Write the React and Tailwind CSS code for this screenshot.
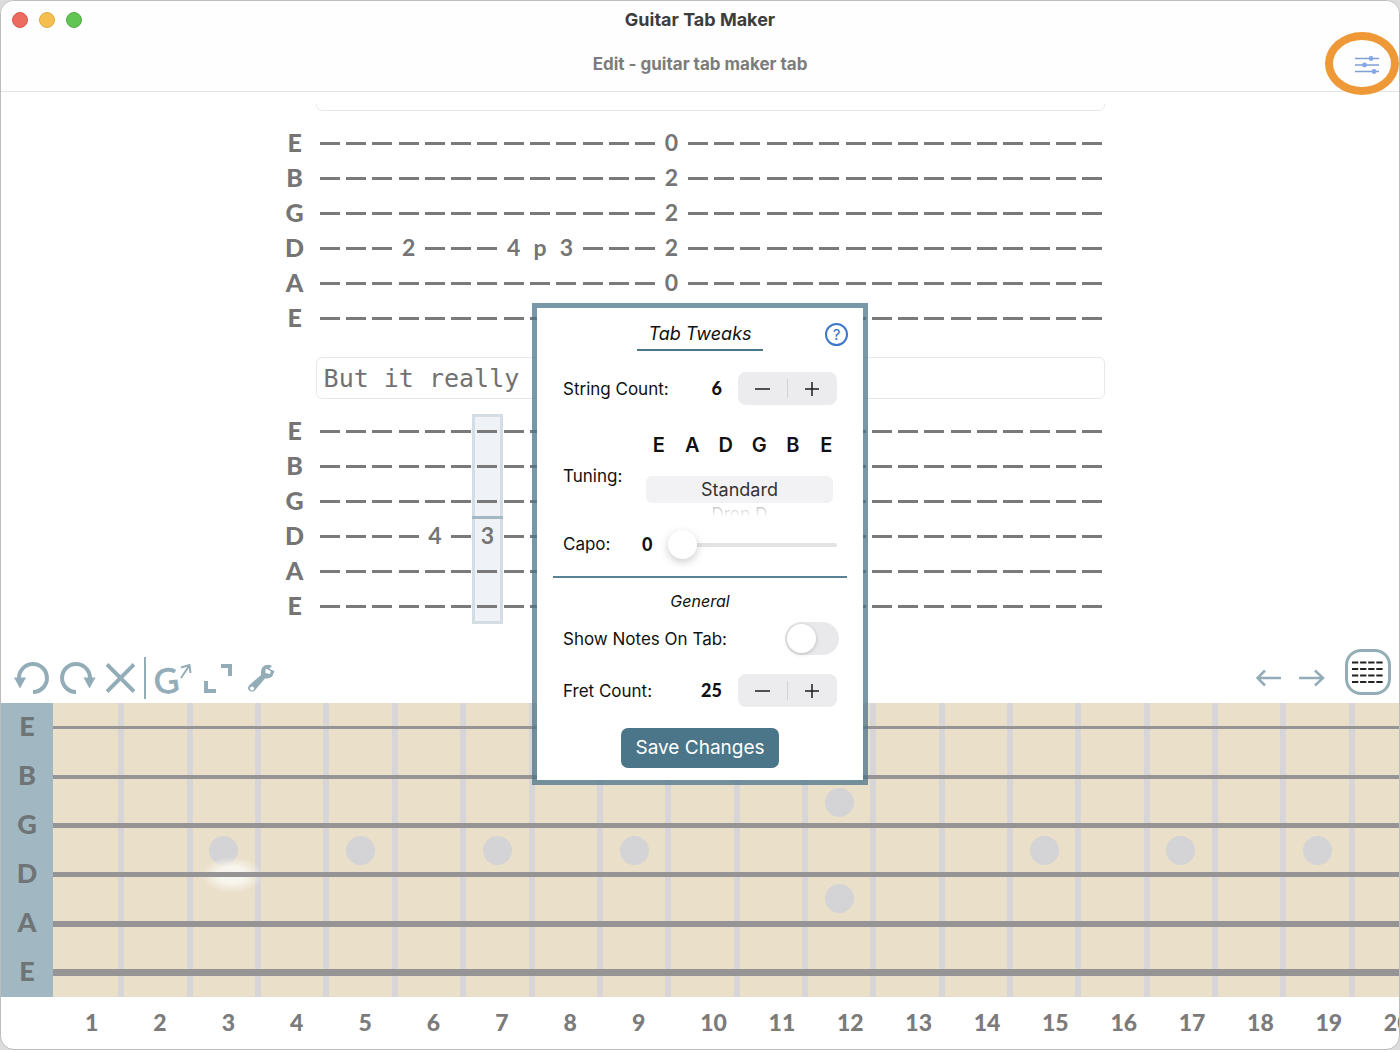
import { useState } from 'react';

const STRINGS = ['E', 'B', 'G', 'D', 'A', 'E'];
const COLUMNS = 30;
const STRING_HEIGHTS = ['h-[3px]', 'h-1', 'h-[5px]', 'h-[5px]', 'h-1.5', 'h-[7px]'];
const SINGLE_DOTS = [3, 5, 7, 9, 15, 17, 19, 21];
const DOUBLE_DOTS = [12, 24];

// notes are keyed by "string-column"
const FIRST_TAB = {
    '0-13': '0', '1-13': '2', '2-13': '2', '3-13': '2', '4-13': '0',
    '3-3': '2', '3-7': '4', '3-8': 'p', '3-9': '3',
};
const SECOND_TAB = { '3-4': '4', '3-6': '3' };

const TabBlock = ({ notes, selected }) => (
    <div className="flex">
        <div className="w-9 pr-2 font-['Lato',sans-serif] text-[25px] font-black text-[#757575]">
            {STRINGS.map((name, i) => (
                <div key={i} className="h-[35px] text-center leading-[33px]">{name}</div>
            ))}
        </div>
        <div className="flex-1 grid grid-cols-[repeat(30,minmax(0,1fr))]">
            {Array.from({ length: COLUMNS }, (_, col) => (
                <div key={col} className="relative">
                    {col === selected && (
                        <div className="absolute inset-y-0 -inset-x-0.5 border-[3px] border-[#d3dde3] bg-[#eff3f7]">
                            <div className="absolute -inset-x-[3px] top-[99px] h-[3px] bg-[#a4b8c4]" />
                        </div>
                    )}
                    {STRINGS.map((_, row) => {
                        const note = notes[`${row}-${col}`];
                        return (
                            <div key={row} className="relative h-[35px] flex items-center justify-center">
                                {note ? (
                                    <span className="pb-0.5 font-['Lato',sans-serif] text-[23px] leading-none font-bold text-[#757575]">{note}</span>
                                ) : (
                                    <span className="w-5 h-[3px] bg-[#7a7a7a]" />
                                )}
                            </div>
                        );
                    })}
                </div>
            ))}
        </div>
    </div>
);

const Lyric = ({ value, label, className }) => (
    <div className={`ml-[35px] flex ${className}`}>
        <input
            type="text"
            aria-label={label}
            defaultValue={value}
            className="w-full h-[42px] rounded-md border border-[#e8e8e8] bg-white px-[7px] font-['DejaVu_Sans_Mono',monospace] text-[25px] text-[#717171]"
        />
    </div>
);

const Toolbar = () => (
    <div className="h-[54px] flex items-start justify-between pl-[13px] pr-2 text-[#93adb8]">
        <div className="flex items-center pt-2">
            <button aria-label="Undo">
                <svg width="36" height="42" viewBox="0 0 36 42" fill="none">
                    <path d="M5 22A14 14 0 1 1 19 35" stroke="currentColor" strokeWidth="4" />
                    <path d="M0 20.500H12L6 31.500Z" fill="currentColor" />
                </svg>
            </button>
            <button aria-label="Redo" className="ml-2.5">
                <svg width="36" height="42" viewBox="0 0 36 42" fill="none">
                    <path d="M30 22A14 14 0 1 0 16 35" stroke="currentColor" strokeWidth="4" />
                    <path d="M23.500 20.500H35.500L29.500 31.500Z" fill="currentColor" />
                </svg>
            </button>
            <button aria-label="Clear" className="ml-2.5">
                <svg width="29" height="42" viewBox="0 0 29 42" fill="none">
                    <path d="M1 7.500L28 34.500M28 7.500L1 34.500" stroke="currentColor" strokeWidth="4" />
                </svg>
            </button>
            <div className="ml-[9px] h-[42px] w-0.5 bg-[#93adb8]" />
            <button aria-label="Chord" className="ml-1">
                <svg width="44" height="42" viewBox="0 0 44 42" fill="none">
                    <text x="4" y="36" transform="rotate(-8 18 24)" fill="currentColor" stroke="currentColor" strokeWidth="1" className="font-['Lato',sans-serif] text-[34px] leading-none">G</text>
                    <path d="M31 21L39 9M31 10.500L39.500 8L40.500 16" stroke="currentColor" strokeWidth="2" />
                </svg>
            </button>
            <button aria-label="Expand" className="ml-[9px]">
                <svg width="30" height="42" viewBox="0 0 30 42" fill="none">
                    <path d="M3 24V34H13M18 9H27V19" stroke="currentColor" strokeWidth="4" />
                </svg>
            </button>
            <button aria-label="Settings" className="ml-3.5">
                <svg width="30" height="42" viewBox="0 0 30 42">
                    <path
                        fill="currentColor"
                        fillRule="evenodd"
                        d="M25 9C20 6 14 9 14 15L14 18L2.500 28C0 31 1 34 4 34.500C6 35 8 34 9 32L18 21.500C22 22 26 20 26 17L27 14.500L24 13.500L23 17L18.500 16L18.500 12L22 12ZM5 29.500a2 2 0 1 0 .1 0Z"
                    />
                    <path d="M21 12L26.500 14.500L24 19" fill="none" stroke="currentColor" strokeWidth="1.500" />
                </svg>
            </button>
        </div>
        <div className="flex items-start">
            <button aria-label="Previous" className="pt-4">
                <svg width="26" height="26" viewBox="0 0 26 26" fill="none">
                    <path d="M25 13H1.500M9 5.500L1.500 13L9 20.500" stroke="currentColor" strokeWidth="2.500" />
                </svg>
            </button>
            <button aria-label="Next" className="pt-4 ml-[17px]">
                <svg width="26" height="26" viewBox="0 0 26 26" fill="none">
                    <path d="M0 13H24M16 5.500L24 13L16 20.500" stroke="currentColor" strokeWidth="2.500" />
                </svg>
            </button>
            <button aria-label="Show tab" className="ml-5 size-[46px] rounded-2xl border-[3px] border-[#93adb8] flex items-center justify-center">
                <svg width="32" height="24" viewBox="0 0 32 24" fill="none">
                    <path d="M0 2.500H32M0 9H32M0 15.500H32M0 22H32" stroke="#222" strokeWidth="1.800" strokeDasharray="6.300 1.800" />
                </svg>
            </button>
        </div>
    </div>
);

const Fretboard = ({ frets }) => (
    <div>
        <div className="flex">
            <div className="w-[52px] shrink-0 bg-[#a1b8c2] font-['Lato',sans-serif] text-[27px] font-black text-[#6f7477]">
                {STRINGS.map((name, i) => (
                    <div key={i} className="h-[49px] text-center leading-[46px]">{name}</div>
                ))}
            </div>
            <div className="relative flex-1 min-w-0 overflow-hidden bg-[#eadfc9] pl-[3px]">
                <div className="h-full w-[1709px] grid grid-cols-[repeat(25,minmax(0,1fr))]">
                    {frets.map((n) => (
                        <div key={n} className="relative flex flex-col items-center justify-center gap-[67px] border-r-[6px] border-[#d8d5d9]">
                            {(SINGLE_DOTS.includes(n) || DOUBLE_DOTS.includes(n)) && <span className="size-[29px] rounded-full bg-[#d4d3d5]" />}
                            {DOUBLE_DOTS.includes(n) && <span className="size-[29px] rounded-full bg-[#d4d3d5]" />}
                            {n === 3 && (
                                <span className="absolute left-2 top-[154px] h-9 w-[62px] bg-[radial-gradient(closest-side,#f8f5ee_0%,#f8f5ee_45%,transparent_100%)]" />
                            )}
                        </div>
                    ))}
                </div>
                <div className="absolute inset-0 flex flex-col">
                    {STRING_HEIGHTS.map((h, i) => (
                        <div key={i} className="flex-1 flex items-center">
                            <div className={`w-full bg-[#969494] ${h}`} />
                        </div>
                    ))}
                </div>
            </div>
        </div>
        <div className="ml-[52px] overflow-hidden pl-1">
            <div className="w-[1709px] grid grid-cols-[repeat(25,minmax(0,1fr))] font-['Lato',sans-serif] text-[23px] font-black text-[#7b7b7b]">
                {frets.map((n) => (
                    <div key={n} className="h-[52px] pl-7 leading-[51px]">{n}</div>
                ))}
            </div>
        </div>
    </div>
);

const Stepper = ({ label, onChange }) => (
    <div className="h-[33px] w-[99px] flex items-center rounded-lg bg-[#ececee] text-[#1c1c1c]">
        <button aria-label={`Decrease ${label}`} onClick={() => onChange(-1)} className="flex-1 h-full flex items-center justify-center">
            <svg width="16" height="16" viewBox="0 0 16 16"><path d="M0 8H15" stroke="currentColor" strokeWidth="1.500" /></svg>
        </button>
        <div className="w-px h-[19px] bg-[#d3d3d5]" />
        <button aria-label={`Increase ${label}`} onClick={() => onChange(1)} className="flex-1 h-full flex items-center justify-center">
            <svg width="16" height="16" viewBox="0 0 16 16"><path d="M0 8H14M7 1V15" stroke="currentColor" strokeWidth="1.500" /></svg>
        </button>
    </div>
);

const TabTweaks = () => {
    const [stringCount, setStringCount] = useState(6);
    const [fretCount, setFretCount] = useState(25);
    const [capo, setCapo] = useState(0);

    return (
        <div role="dialog" aria-label="Tab Tweaks" className="w-[336px] border-[5px] border-[#4b7689]/75 bg-white bg-clip-padding pt-[11px] pb-3 text-[17px] leading-6 text-[#111]">
            <div className="relative flex justify-center">
                <h2 className="h-8 w-[126px] border-b-2 border-[#4b7689] text-center text-[18px] leading-[30px] italic">Tab Tweaks</h2>
                <button aria-label="Help" className="absolute right-[15px] top-1 size-[23px] rounded-full border-2 border-[#3b78c8] text-[15px] leading-[19px] text-[#2f6fc4]">?</button>
            </div>
            <div className="mt-[21px] px-[26px] flex items-center">
                <span className="flex-1">String Count:</span>
                <span className="mr-4 pb-0.5 font-['Lato',sans-serif] text-[18px] font-black">{stringCount}</span>
                <Stepper label="string count" onChange={(d) => setStringCount(stringCount + d)} />
            </div>
            <div className="mt-6 pl-[26px] pr-5 flex items-center">
                <label htmlFor="tuning" className="w-[79px] pt-1.5">Tuning:</label>
                <div className="flex-1">
                    <div className="grid grid-cols-6 text-center text-[20px] leading-8 font-semibold">
                        {[...STRINGS].reverse().map((s, i) => <span key={i}>{s}</span>)}
                    </div>
                    <div className="mt-[15px] pl-1 pr-2.5">
                        <select id="tuning" defaultValue="Standard" className="block h-[27px] w-full appearance-none rounded-md bg-[#f2f2f4] text-center [text-align-last:center] text-[18px] leading-[27px] text-[#333]">
                            <option>Standard</option>
                            <option>Drop D</option>
                        </select>
                        <div className="h-3.5 overflow-hidden bg-linear-to-b from-[#b0b0b0] to-white bg-clip-text text-center leading-[22px] text-transparent">Drop D</div>
                    </div>
                </div>
            </div>
            <div className="mt-2 px-[26px] h-10 flex items-center">
                <label htmlFor="capo" className="w-[79px] pb-0.5">Capo:</label>
                <span className="w-[26px] pb-0.5 font-['Lato',sans-serif] text-[18px] font-black">{capo}</span>
                <input
                    id="capo"
                    type="range"
                    min="0"
                    max="12"
                    value={capo}
                    onChange={(e) => setCapo(Number(e.target.value))}
                    className="flex-1 min-w-0 h-7 appearance-none bg-transparent [&::-webkit-slider-runnable-track]:h-1 [&::-webkit-slider-runnable-track]:rounded-full [&::-webkit-slider-runnable-track]:bg-[#e3e3e4] [&::-webkit-slider-thumb]:appearance-none [&::-webkit-slider-thumb]:size-[29px] [&::-webkit-slider-thumb]:-mt-[13px] [&::-webkit-slider-thumb]:rounded-full [&::-webkit-slider-thumb]:bg-white [&::-webkit-slider-thumb]:shadow-[0_3px_9px_rgba(0,0,0,0.2)]"
                />
            </div>
            <div className="mt-[11px] mx-4 h-0.5 bg-[#5a8295]" />
            <h3 className="mt-[11px] text-center text-[16px] leading-6 italic">General</h3>
            <div className="mt-[9px] pl-[26px] pr-6 flex items-center justify-between">
                <label htmlFor="notes">Show Notes On Tab:</label>
                <input
                    id="notes"
                    type="checkbox"
                    role="switch"
                    className="h-[33px] w-[54px] appearance-none rounded-full bg-[#e9e9eb] p-0.5 before:block before:size-[29px] before:rounded-full before:bg-white before:shadow-[0_1px_4px_rgba(0,0,0,0.2)] checked:bg-[#4b7689] checked:before:ml-[21px]"
                />
            </div>
            <div className="mt-[19px] px-[26px] flex items-center">
                <span className="flex-1">Fret Count:</span>
                <span className="mr-4 pb-0.5 font-['Lato',sans-serif] text-[18px] font-black">{fretCount}</span>
                <Stepper label="fret count" onChange={(d) => setFretCount(fretCount + d)} />
            </div>
            <div className="mt-[21px] flex justify-center">
                <button className="h-10 w-[158px] rounded-[7px] bg-[#4b7689] text-[19px] text-white">Save Changes</button>
            </div>
        </div>
    );
};

const App = () => {
    const frets = Array.from({ length: 25 }, (_, i) => i + 1);

    return (
        <div className="min-h-screen flex bg-[#dcdcdc] font-['Inter',sans-serif]">
            <div className="relative flex-1 min-w-0 flex flex-col overflow-hidden rounded-[14px] border border-[#bdbdbd] bg-white">
                <header className="relative border-b border-[#e4e4e4] bg-[#fefefe]">
                    <div className="h-[37px] px-[11px] flex items-center">
                        <div className="flex-1 flex gap-[11px]">
                            <button aria-label="Close" className="size-4 rounded-full border border-[#d5594f] bg-[#ec6a5e]" />
                            <button aria-label="Minimize" className="size-4 rounded-full border border-[#dfa944] bg-[#f4bf4f]" />
                            <button aria-label="Zoom" className="size-4 rounded-full border border-[#52ad44] bg-[#61c554]" />
                        </div>
                        <h1 className="text-[18px] font-bold text-[#3d3d3d]">Guitar Tab Maker</h1>
                        <div className="flex-1" />
                    </div>
                    <div className="h-[53px] px-5 flex items-center">
                        <div className="flex-1" />
                        <h2 className="text-[17px] font-bold text-[#7c7c7c]">Edit - guitar tab maker tab</h2>
                        <div className="flex-1 flex justify-end">
                            <button aria-label="Tab tweaks">
                                <svg width="24" height="20" viewBox="0 0 24 20">
                                    <path d="M0 3.500H24M0 10H24M0 16.500H24" stroke="#7f9fd6" strokeWidth="1.500" />
                                    <g fill="#82a5ec">
                                        <circle cx="16" cy="3.500" r="2.400" />
                                        <circle cx="9.500" cy="10" r="2.400" />
                                        <circle cx="19" cy="16.500" r="2.400" />
                                    </g>
                                </svg>
                            </button>
                        </div>
                    </div>
                    <div className="absolute right-0 top-[31px] z-10 h-[63px] w-[74px] rounded-[50%] border-8 border-[#ee9838] pointer-events-none" />
                </header>

                <main className="flex-1 pt-3">
                    <div className="mx-auto w-[60%] overflow-hidden pr-3.5">
                        <Lyric label="First lyric" value="" className="-mt-[35px]" />
                        <div className="mt-[15px]">
                            <TabBlock notes={FIRST_TAB} />
                        </div>
                        <Lyric label="Second lyric" value="But it really" className="mt-[21px]" />
                        <div className="mt-[15px]">
                            <TabBlock notes={SECOND_TAB} selected={6} />
                        </div>
                    </div>
                </main>

                <Toolbar />
                <Fretboard frets={frets} />
            </div>

            <div className="fixed inset-0 z-20 flex items-center justify-center pt-[38px]">
                <TabTweaks />
            </div>
        </div>
    );
};

export default App;
